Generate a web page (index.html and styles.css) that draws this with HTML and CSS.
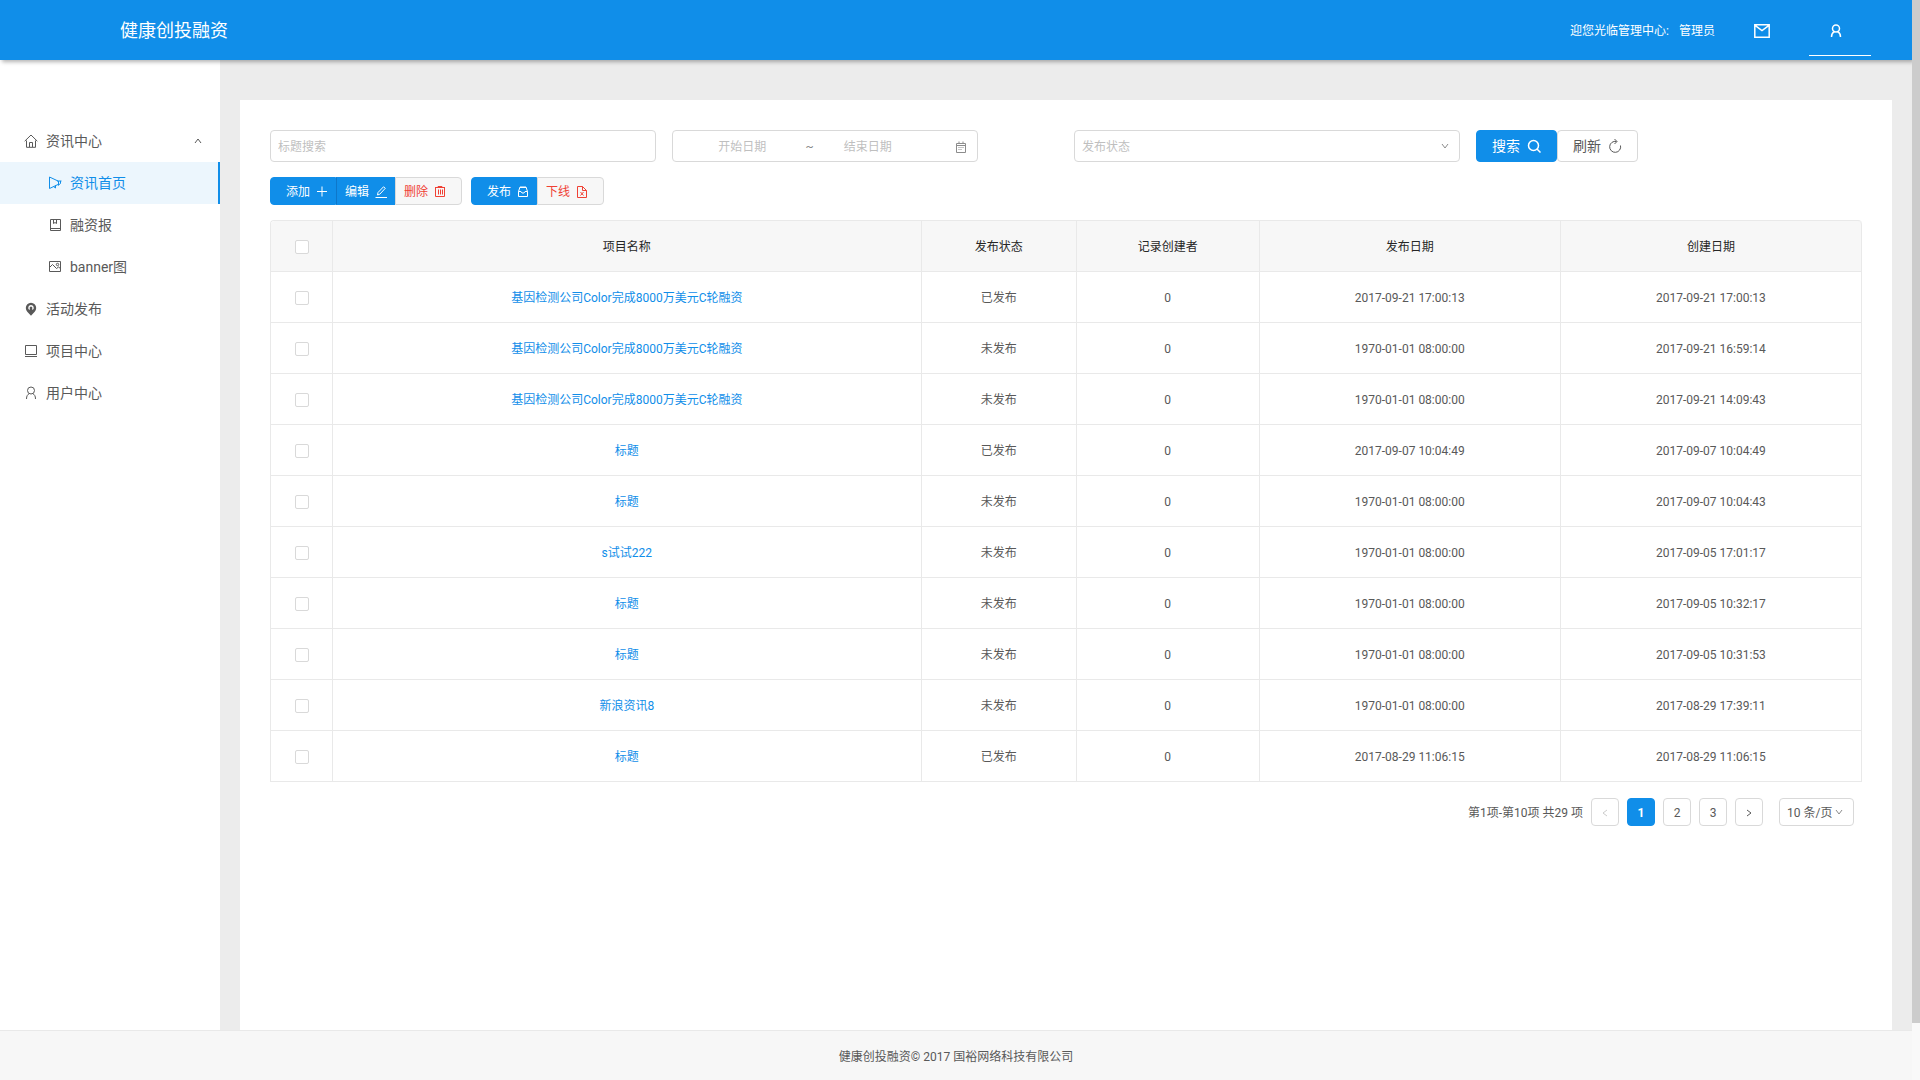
FILE: index.html
```html
<!DOCTYPE html>
<html lang="zh-CN">
<head>
<meta charset="utf-8">
<meta name="viewport" content="width=device-width, initial-scale=1">
<title>健康创投融资</title>
<link rel="stylesheet" href="styles.css">
</head>
<body>
<svg class="sprite" aria-hidden="true">
  <symbol id="i-down" viewBox="0 0 8 8"><path d="M1 2l3 4 3-4"/></symbol>
  <symbol id="i-up" viewBox="0 0 8 8"><path d="M1 6l3-4 3 4"/></symbol>
  <symbol id="i-left" viewBox="0 0 8 8"><path d="M6 1L2 4l4 3"/></symbol>
  <symbol id="i-right" viewBox="0 0 8 8"><path d="M2 1l4 3-4 3"/></symbol>
  <symbol id="i-user" viewBox="0 0 14 14"><circle cx="7" cy="4.500" r="3.500"/><path d="M2.500 13c0-3 1-4.500 3-5.500M11.500 13c0-3-1-4.500-3-5.500"/></symbol>
</svg>
<div class="viewport">
<div class="page">
  <header class="header">
    <h1 class="brand">健康创投融资</h1>
    <div class="header-right">
      <span class="welcome">迎您光临管理中心:</span>
      <span class="role">管理员</span>
      <button class="head-item" type="button" aria-label="消息"><svg class="icon-16" viewBox="0 0 16 16"><path stroke-width="1.500" d="M.8 1.800h14.400v12.400H.8zM1 2.300l7 5.200 7-5.200"/></svg></button>
      <button class="head-item is-current" type="button" aria-label="用户"><svg class="icon-14" stroke-width="1.500"><use href="#i-user"/></svg></button>
    </div>
  </header>
  <div class="body">
    <nav class="sidebar">
      <a class="menu-item" href="#"><svg class="icon-14" viewBox="0 0 14 14"><path d="M.7 7.200L7 1l6.300 6.200M2.500 6.500v6.800h9V6.500M5.500 13V8.500h3V13"/></svg><span>资讯中心</span><svg class="icon-8 menu-arrow"><use href="#i-up"/></svg></a>
      <a class="menu-item is-sub is-active" href="#"><svg class="icon-14" viewBox="0 0 14 14"><path d="M1.500 1v11.500L10 8.500M1.500 1L10 5M9 5h4.500M10.500 5v4.500M12.500 5v2.500L10.500 9M5.500 10.500l2 1.500V9.500"/></svg><span>资讯首页</span></a>
      <a class="menu-item is-sub" href="#"><svg class="icon-14" viewBox="0 0 14 14"><path d="M2.500 1.500h10v11h-10zM2.500 10.500h10M5.500 1.500v4l1.500-1 1.500 1v-4"/></svg><span>融资报</span></a>
      <a class="menu-item is-sub" href="#"><svg class="icon-14" viewBox="0 0 14 14"><path d="M1.500 1.500h11v10h-11zM1.500 7.500l3-3 4 4 2-1.500 2 1.500"/><circle cx="9.500" cy="4.500" r="1.200"/></svg><span>banner图</span></a>
      <a class="menu-item" href="#"><svg class="icon-14" viewBox="0 0 14 14"><path class="solid" fill-rule="evenodd" d="M7 .8a5.200 5.200 0 0 0-5.200 5.200C1.800 9 4 10.500 7 13.800 10 10.500 12.200 9 12.200 6A5.200 5.200 0 0 0 7 .8zM7 3a2.800 2.800 0 0 1 1.800 4.900L8 7a1.400 1.400 0 1 0-2 0l-.8.9A2.800 2.800 0 0 1 7 3z"/></svg><span>活动发布</span></a>
      <a class="menu-item" href="#"><svg class="icon-14" viewBox="0 0 14 14"><path d="M1.500 1.500h11v9h-11zM1 12.500h12"/></svg><span>项目中心</span></a>
      <a class="menu-item" href="#"><svg class="icon-14"><use href="#i-user"/></svg><span>用户中心</span></a>
    </nav>
    <main class="main">
      <section class="panel">
        <form class="filters">
          <input class="field" type="text" placeholder="标题搜索" aria-label="标题搜索">
          <div class="field range">
            <input class="range-start" type="text" placeholder="开始日期" aria-label="开始日期">
            <span class="tilde">~</span>
            <input class="range-end" type="text" placeholder="结束日期" aria-label="结束日期">
            <svg class="icon-12" viewBox="0 0 12 12"><path d="M1.500 2.500h9v9h-9zM1 4.500h10M4 .5v2M8 .5v2M3.500 6.500h1m1 0h1m1 0h1M3.500 8.500h1m1 0h1"/></svg>
          </div>
          <div class="select-box">
            <select class="field" aria-label="发布状态"><option>发布状态</option><option>已发布</option><option>未发布</option></select>
            <svg class="icon-8"><use href="#i-down"/></svg>
          </div>
          <div class="actions">
            <button class="btn btn-primary" type="button">搜索<svg class="icon-14" stroke-width="1.500" viewBox="0 0 14 14"><circle cx="6.500" cy="6.500" r="5"/><path d="M10 10l3.500 3.500"/></svg></button>
            <button class="btn" type="button">刷新<svg class="icon-14" viewBox="0 0 14 14"><path d="M8.500 2.500a5.500 5.500 0 1 0 4 4M6.500 0l2.500 2.500-2.500 2.500"/></svg></button>
          </div>
        </form>
        <div class="toolbar">
          <div class="btn-group">
            <button class="btn btn-small btn-primary" type="button">添加<svg class="icon-12" viewBox="0 0 12 12"><path d="M1 5.500h10M6 .5v10"/></svg></button>
            <button class="btn btn-small btn-primary" type="button">编辑<svg class="icon-12" viewBox="0 0 12 12"><path d="M.5 11.500H12M2.500 9L3 6.500 8.500.8l1.800 1.500L4.800 8.200z"/></svg></button>
            <button class="btn btn-small btn-danger" type="button">删除<svg class="icon-12" viewBox="0 0 12 12"><path d="M1 1.500h10M4 1.500v-1h4v1M1.500 1.500v9h9v-9M4.500 3.500v5M6.500 3.500v5M8.500 3.500v5"/></svg></button>
          </div>
          <div class="btn-group">
            <button class="btn btn-small btn-primary" type="button">发布<svg class="icon-12" viewBox="0 0 12 12"><path d="M1.500 5.500l1.500-4.500h6l1.500 4.500v5h-9zM1.500 5.500h2.500l1 1.500h2l1-1.500h2.500M3 1.500h6"/></svg></button>
            <button class="btn btn-small btn-danger" type="button">下线<svg class="icon-12" viewBox="0 0 12 12"><path d="M1.500.5h5l4 4v7h-9zM6.500.5v4h4M4.500 9.500l3-3.500M4.500 6l3 3.500"/></svg></button>
          </div>
        </div>
        <table class="table">
          <colgroup><col class="c-check"><col class="c-name"><col class="c-state"><col class="c-owner"><col class="c-date"><col class="c-date"></colgroup>
          <thead><tr><th><input type="checkbox" aria-label="全选"></th><th>项目名称</th><th>发布状态</th><th>记录创建者</th><th>发布日期</th><th>创建日期</th></tr></thead>
          <tbody>
            <tr><td><input type="checkbox" aria-label="选择第1项"></td><td><a href="#">基因检测公司Color完成8000万美元C轮融资</a></td><td>已发布</td><td>0</td><td>2017-09-21 17:00:13</td><td>2017-09-21 17:00:13</td></tr>
            <tr><td><input type="checkbox" aria-label="选择第2项"></td><td><a href="#">基因检测公司Color完成8000万美元C轮融资</a></td><td>未发布</td><td>0</td><td>1970-01-01 08:00:00</td><td>2017-09-21 16:59:14</td></tr>
            <tr><td><input type="checkbox" aria-label="选择第3项"></td><td><a href="#">基因检测公司Color完成8000万美元C轮融资</a></td><td>未发布</td><td>0</td><td>1970-01-01 08:00:00</td><td>2017-09-21 14:09:43</td></tr>
            <tr><td><input type="checkbox" aria-label="选择第4项"></td><td><a href="#">标题</a></td><td>已发布</td><td>0</td><td>2017-09-07 10:04:49</td><td>2017-09-07 10:04:49</td></tr>
            <tr><td><input type="checkbox" aria-label="选择第5项"></td><td><a href="#">标题</a></td><td>未发布</td><td>0</td><td>1970-01-01 08:00:00</td><td>2017-09-07 10:04:43</td></tr>
            <tr><td><input type="checkbox" aria-label="选择第6项"></td><td><a href="#">s试试222</a></td><td>未发布</td><td>0</td><td>1970-01-01 08:00:00</td><td>2017-09-05 17:01:17</td></tr>
            <tr><td><input type="checkbox" aria-label="选择第7项"></td><td><a href="#">标题</a></td><td>未发布</td><td>0</td><td>1970-01-01 08:00:00</td><td>2017-09-05 10:32:17</td></tr>
            <tr><td><input type="checkbox" aria-label="选择第8项"></td><td><a href="#">标题</a></td><td>未发布</td><td>0</td><td>1970-01-01 08:00:00</td><td>2017-09-05 10:31:53</td></tr>
            <tr><td><input type="checkbox" aria-label="选择第9项"></td><td><a href="#">新浪资讯8</a></td><td>未发布</td><td>0</td><td>1970-01-01 08:00:00</td><td>2017-08-29 17:39:11</td></tr>
            <tr><td><input type="checkbox" aria-label="选择第10项"></td><td><a href="#">标题</a></td><td>已发布</td><td>0</td><td>2017-08-29 11:06:15</td><td>2017-08-29 11:06:15</td></tr>
          </tbody>
        </table>
        <div class="pagination">
          <span class="total">第1项-第10项 共29 项</span>
          <button class="page-btn is-disabled" type="button" aria-label="上一页" disabled><svg class="icon-8"><use href="#i-left"/></svg></button>
          <button class="page-btn is-active" type="button">1</button>
          <button class="page-btn" type="button">2</button>
          <button class="page-btn" type="button">3</button>
          <button class="page-btn" type="button" aria-label="下一页"><svg class="icon-8"><use href="#i-right"/></svg></button>
          <div class="select-box page-size">
            <select class="field" aria-label="每页条数"><option>10 条/页</option><option>20 条/页</option></select>
            <svg class="icon-8"><use href="#i-down"/></svg>
          </div>
        </div>
      </section>
    </main>
  </div>
  <footer class="footer">健康创投融资© 2017 国裕网络科技有限公司</footer>
</div>
<div class="scroll-track"><div class="scroll-thumb"></div></div>
</div>
</body>
</html>
```
FILE: styles.css
```css
* { box-sizing: border-box; }

body {
  margin: 0;
  font: 12px/18px Roboto, "Noto Sans CJK SC", sans-serif;
  color: #595959;
  background: #ececec;
}

button, input, select { font: inherit; color: inherit; margin: 0; }
button { cursor: pointer; }
a { color: #108ee9; text-decoration: none; }
svg { fill: none; stroke: currentColor; flex: none; }

.sprite { position: absolute; width: 0; height: 0; }
.solid { fill: currentColor; stroke: none; }
.icon-8 { width: 8px; height: 8px; }
.icon-12 { width: 12px; height: 12px; }
.icon-14 { width: 14px; height: 14px; }
.icon-16 { width: 16px; height: 16px; }

.viewport { display: flex; min-height: 100vh; }
.page { flex: 1; min-width: 0; display: flex; flex-direction: column; }

.scroll-track { width: 8px; background: #f9f9f9; }
.scroll-thumb { height: 94.7%; background: #ccc; }

/* Header */
.header {
  position: relative;
  display: flex;
  align-items: center;
  justify-content: space-between;
  height: 60px;
  padding: 2px 41px 0 120px;
  color: #fff;
  background: #108ee9;
  box-shadow: 2px 2px 4px rgba(0, 0, 0, .3);
  clip-path: inset(0 0 -8px 0);
}
.brand { margin: 0; font-size: 18px; font-weight: 400; line-height: 28px; }
.header-right { display: flex; align-items: center; }
.role { margin: 0 16px 0 10px; }
.head-item {
  display: flex;
  align-items: center;
  justify-content: center;
  width: 62px;
  height: 50px;
  padding: 0;
  color: #fff;
  background: none;
  border: 0;
  border-bottom: 1px solid transparent;
}
.head-item.is-current { margin-left: 16px; padding-right: 8px; border-bottom-color: #fff; }

/* Sidebar */
.body { flex: 1; display: flex; }
.sidebar { width: 220px; padding-top: 60px; background: #fff; }
.menu-item {
  display: flex;
  align-items: center;
  gap: 8px;
  height: 42px;
  padding: 0 18px 0 24px;
  font-size: 14px;
  color: #595959;
}
.menu-item.is-sub { padding-left: 48px; }
.menu-item.is-active { color: #108ee9; background: #ecf6fd; border-right: 2px solid #108ee9; }
.menu-arrow { margin-left: auto; }

/* Content */
.main { flex: 1; min-width: 0; display: flex; padding: 40px 20px 0; }
.panel { flex: 1; min-width: 0; padding: 30px; background: #fff; }

.filters { display: grid; grid-template-columns: repeat(4, 1fr); gap: 16px; }
.field {
  width: 100%;
  height: 32px;
  padding: 2px 7px 0;
  background: #fff;
  border: 1px solid #d9d9d9;
  border-radius: 4px;
  outline: 0;
}
::placeholder { color: #bfbfbf; opacity: 1; }

.range { display: flex; align-items: center; max-width: 306px; padding-right: 10px; color: #8c8c8c; }
.range input { min-width: 0; padding: 0; border: 0; background: none; text-align: center; outline: 0; }
.range-start { flex: 124 0 0; }
.range-end { flex: 106 0 0; }
.range .icon-12 { margin-left: 34px; }
.tilde { width: 10px; text-align: center; }

.select-box { position: relative; }
.select-box select { appearance: none; color: #bfbfbf; }
.select-box svg { position: absolute; right: 11px; top: 50%; margin-top: -4px; color: #8c8c8c; pointer-events: none; }

.btn {
  display: inline-flex;
  align-items: center;
  gap: 7px;
  height: 32px;
  padding: 0 15px;
  font-size: 14px;
  background: #fff;
  border: 1px solid #d9d9d9;
  border-radius: 4px;
}
.btn-primary { color: #fff; background: #108ee9; border-color: #108ee9; }
.actions { display: flex; align-items: flex-start; }

.toolbar { display: flex; gap: 9px; margin: 15px 0; }
.btn-group { display: flex; }
.btn-small { height: 28px; padding: 2px 7px 0 8px; font-size: 12px; gap: 6px; border-radius: 0; }
.btn-group .btn:first-child { padding-left: 15px; border-radius: 4px 0 0 4px; }
.btn-group .btn:last-child { padding-right: 15px; border-radius: 0 4px 4px 0; }
.btn-primary + .btn-primary { border-left-color: #0e77ca; }
.btn-danger { color: #f04134; background: #f7f7f7; }

/* Table */
.table {
  width: 100%;
  table-layout: fixed;
  border-collapse: separate;
  border-spacing: 0;
  border: 1px solid #e9e9e9;
  border-width: 1px 0 0 1px;
  border-radius: 4px 4px 0 0;
}
.table th, .table td {
  height: 51px;
  padding: 2px 8px 0;
  text-align: center;
  border: 1px solid #e9e9e9;
  border-width: 0 1px 1px 0;
}
.table th { font-weight: 400; color: #262626; background: #f7f7f7; }
.table th:first-child { border-top-left-radius: 4px; }
.table th:last-child { border-top-right-radius: 4px; }
.c-check { width: 62px; }
.c-name { width: 37%; }
.c-state { width: 155px; }
.c-owner { width: 183px; }
.table input {
  appearance: none;
  display: block;
  width: 14px;
  height: 14px;
  margin: 0 auto;
  background: #fff;
  border: 1px solid #d9d9d9;
  border-radius: 2px;
}
.table input:checked { background: #108ee9; border-color: #108ee9; }

/* Pagination */
.pagination { display: flex; align-items: center; justify-content: flex-end; gap: 8px; margin: 16px 8px 0 0; }
.total { padding-top: 2px; }
.page-btn {
  display: flex;
  align-items: center;
  justify-content: center;
  width: 28px;
  height: 28px;
  padding: 2px 0 0;
  background: #fff;
  border: 1px solid #d9d9d9;
  border-radius: 4px;
}
.page-btn.is-active { color: #fff; font-weight: 700; background: #108ee9; border-color: #108ee9; }
.page-btn.is-disabled { color: #ccc; }
.page-size { width: 75px; margin-left: 8px; }
.page-size select { height: 28px; color: #595959; }

.footer {
  height: 50px;
  padding-top: 17px;
  text-align: center;
  background: #f7f7f7;
  border-top: 1px solid #e9e9e9;
}
```
